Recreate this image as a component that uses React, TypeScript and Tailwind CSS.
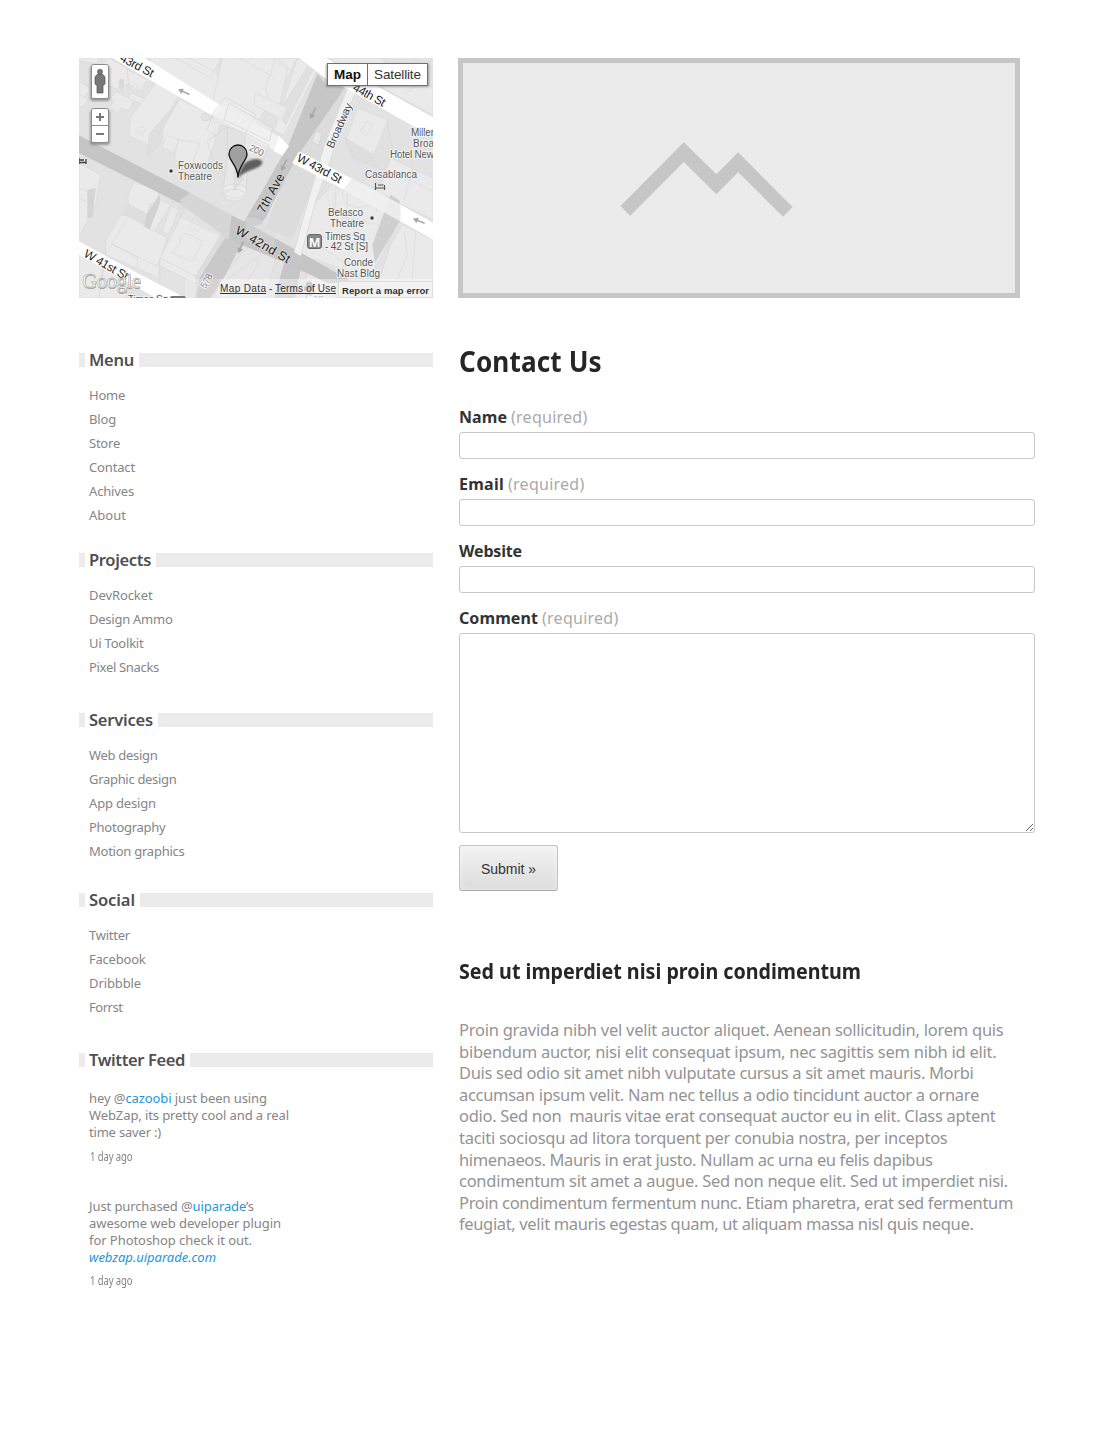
import { useLayoutEffect, useRef, type ReactNode } from 'react';

/* Single line of text whose tracking is adjusted so that it spans `w` pixels. */
function Fit({ w, className = '', children }: { w: number; className?: string; children: ReactNode }) {
  const ref = useRef<HTMLSpanElement>(null);
  useLayoutEffect(() => {
    const el = ref.current;
    if (!el) return;
    el.style.letterSpacing = '0px';
    const natural = el.getBoundingClientRect().width;
    const count = (el.textContent || '').length;
    el.style.letterSpacing = `${(w - natural) / count}px`;
  }, [w]);
  return (
    <span ref={ref} className={`inline-block whitespace-pre ${className}`}>
      {children}
    </span>
  );
}

type Item = [string, number];

const sections: { title: string; w: number; gap: string; items: Item[] }[] = [
  { title: 'Menu', w: 45, gap: 'mb-[26px]', items: [['Home', 36], ['Blog', 27], ['Store', 31], ['Contact', 46], ['Achives', 45], ['About', 37]] },
  { title: 'Projects', w: 62, gap: 'mb-[34px]', items: [['DevRocket', 63.5], ['Design Ammo', 83.5], ['Ui Toolkit', 54.5], ['Pixel Snacks', 70]] },
  { title: 'Services', w: 64, gap: 'mb-[30px]', items: [['Web design', 68.5], ['Graphic design', 87.5], ['App design', 67], ['Photography', 76.5], ['Motion graphics', 95.5]] },
  { title: 'Social', w: 46, gap: 'mb-[34px]', items: [['Twitter', 41], ['Facebook', 56.5], ['Dribbble', 52], ['Forrst', 33.5]] },
];

const body: Item[] = [
  ['Proin gravida nibh vel velit auctor aliquet. Aenean sollicitudin, lorem quis', 544.5],
  ['bibendum auctor, nisi elit consequat ipsum, nec sagittis sem nibh id elit.', 537.5],
  ['Duis sed odio sit amet nibh vulputate cursus a sit amet mauris. Morbi', 514.5],
  ['accumsan ipsum velit. Nam nec tellus a odio tincidunt auctor a ornare', 520],
  ['odio. Sed non  mauris vitae erat consequat auctor eu in elit. Class aptent', 536.5],
  ['taciti sociosqu ad litora torquent per conubia nostra, per inceptos', 488.5],
  ['himenaeos. Mauris in erat justo. Nullam ac urna eu felis dapibus', 473.5],
  ['condimentum sit amet a augue. Sed non neque elit. Sed ut imperdiet nisi.', 549],
  ['Proin condimentum fermentum nunc. Etiam pharetra, erat sed fermentum', 554],
  ['feugiat, velit mauris egestas quam, ut aliquam massa nisl quis neque.', 514.5],
];

function Heading({ title, w }: { title: string; w: number }) {
  return (
    <div className="flex h-[14px] items-center">
      <div className="h-full w-[6px] bg-[#ebebeb]" />
      <h3 className="ml-[4px] mr-[5px] text-[16.5px] leading-[22px] font-semibold text-[#4f4f4f]">
        <Fit w={w}>{title}</Fit>
      </h3>
      <div className="h-full flex-1 bg-[#ebebeb]" />
    </div>
  );
}

function Arrow({ x, y, r }: { x: number; y: number; r: number }) {
  return (
    <g transform={`translate(${x} ${y}) rotate(${r})`} stroke="#a6a6a6" fill="#a6a6a6">
      <path d="M-5 0H6" strokeWidth="1.5" fill="none" />
      <path d="M-6.500 0L-1.500 -3V3Z" stroke="none" />
    </g>
  );
}

function CityMap() {
  return (
    <svg width="354" height="240" viewBox="0 0 354 240" className="block" fontFamily="Liberation Sans, Arial, sans-serif">
      <defs>
        <filter id="soft" x="-50%" y="-50%" width="200%" height="200%">
          <feGaussianBlur stdDeviation="1.3" />
        </filter>
      </defs>
      <rect width="354" height="240" fill="#e2e2e2" />

      {/* ground drawing, on a grid three times finer than the labels */}
      <g transform="scale(.33333)">
        <g fill="#eaeaea" stroke="#dadada" strokeWidth="2">
          <path d="M0 0H60L55 18L0 8Z" />
          <path d="M0 70L32 90L5 150H0Z" />
          <path d="M90 0L145 30L148 75L120 98L85 80V45L60 25Z" />
          <path d="M145 35L205 65L185 98L150 80Z" />
          <path d="M110 100L165 128L150 160L125 150L118 165L90 150L108 130L95 122Z" />
          <path d="M170 75L178 84L165 98L155 92Z" />
          <path d="M155 105L205 125L195 140L148 122Z" />
          <path d="M0 110L28 122L10 148L0 145Z" />
          <path d="M155 178L230 75L300 110L225 250L210 262L150 232Z" />
          <path d="M185 205L200 212L190 230L174 222Z" />
          <path d="M210 230L300 125L308 130L235 265L208 292Z" fill="#dfdfdf" />
          <path d="M252 210L302 122L395 170L410 245L380 330L250 262Z" />
          <path d="M262 232L300 245L285 285L248 268Z" />
          <path d="M300 245L362 255L335 330L285 302Z" />
          <path d="M210 0H425L410 45L445 70L400 140L225 40Z" />
          <path d="M290 0L395 60L425 0M330 0L405 40" fill="none" />
          <path d="M430 0H655L625 60L520 215L400 138Z" />
          <path d="M560 90L590 0L627 25L600 150L570 140Z" />
          <path d="M655 0L712 40L615 232L585 218Z" />
          <path d="M600 160L690 20L705 28L620 200Z" fill="#e0e0e0" />
          <path d="M530 105L625 150L608 185L525 140Z" />
          <path d="M575 0L650 45M480 0L590 60" fill="none" />
          <path d="M748 0H900L1062 90V172L840 50Z" />
          <path d="M915 0L945 75L1062 5M980 105L1062 50M1000 0L1062 35" fill="none" />
          <path d="M800 250L835 150L925 185L940 270L910 315L815 285Z" />
          <path d="M798 240L885 290L895 330L820 300Z" fill="#dedede" />
          <path d="M845 222L862 190L880 200L862 232Z" />
          <path d="M885 290L925 190L940 270L918 335L893 330Z" fill="#e0e0e0" />
          <path d="M935 300L1062 360V485L965 438L900 400Z" />
          <path d="M960 350L1062 400M1000 330L975 430" fill="none" />
          <path d="M0 315L65 350L50 440L0 535Z" />
          <path d="M0 390L45 408L38 440L0 420Z" />
          <path d="M146 415L165 370L240 400L235 425L212 440L205 470L150 440Z" />
          <path d="M150 440L205 470L240 412V455L205 520L125 480Z" fill="#dedede" />
          <path d="M150 475L265 540L240 610V660L80 590V550L125 470Z" />
          <path d="M98 558L150 475L265 540L235 625Z" />
          <path d="M98 558L175 598V630M80 590L98 558" fill="none" />
          <path d="M245 425L275 440L225 520L200 505Z" />
          <path d="M275 445L300 455L268 530L250 520Z" />
          <path d="M243 600L340 415L458 470L452 520L355 680L243 625Z" />
          <path d="M243 600L350 655L445 500L455 465" fill="none" />
          <path d="M300 545L320 525L372 550L340 610L278 585L305 555Z" />
          <path d="M328 510L370 435L392 448L358 522Z" />
          <path d="M243 625L355 680V720H243Z" fill="#e3e3e3" />
          <path d="M350 655L450 490L455 570L360 720H352Z" fill="#dddddd" />
          <path d="M0 590L70 625L62 720H0Z" />
          <path d="M75 630L150 665L140 720H60Z" />
          <path d="M430 655L515 560L590 600L580 640L560 720H405Z" fill="#e6e6e6" />
          <path d="M440 668L545 590L520 650L455 720" fill="none" />
          <path d="M560 480L640 320L740 375L690 470L640 520Z" fill="#e5e5e5" />
          <path d="M575 440L600 390L650 410L640 490L612 500Z" />
          <path d="M620 330L730 375L640 470L650 345" fill="none" />
          <path d="M760 380L960 480L915 580L870 660L665 590L705 440Z" />
          <path d="M740 400L880 360L935 430L900 500L760 470Z" opacity=".7" />
          <path d="M770 355V470L880 500M805 350V480M705 550L790 610L800 650M770 530L870 570" fill="none" />
          <ellipse cx="830" cy="435" rx="68" ry="55" fill="none" />
          <ellipse cx="840" cy="410" rx="50" ry="38" fill="none" />
          <path d="M970 500L1062 545V720L900 670L935 560Z" />
          <path d="M975 520L985 590L945 690M1010 520L1000 660" fill="none" />
          <path d="M690 630L780 670L760 720H665Z" />
        </g>
        <path d="M60 30L85 45V92L60 82ZM120 65L135 62V95L118 92Z" fill="#dadada" />
        <path d="M935 410L962 428V490L888 615L880 560Z" fill="#cfcfcf" />
        <path d="M25 395L50 390L40 480H25Z" fill="#d4d4d4" />
        <path d="M206 463L243 412V435L212 515L195 505Z" fill="#d2d2d2" />

        {/* avenues */}
        <path d="M712 42L800 85L830 90L740 290L640 545L560 510L600 400L690 110Z" fill="#dcdcdc" />
        <path d="M700 85L716 48L745 84L800 86L662 285L628 345L560 478L545 500L500 508L493 495L560 380L628 262Z" fill="#c6c6c6" />
        <path d="M712 220L728 226L720 262L698 250Z" fill="#e8e8e8" stroke="#cfcfcf" strokeWidth="2" />
        <path d="M455 495L492 560L470 590L440 650L395 720H350L362 660L450 520Z" fill="#c9c9c9" />
        <path d="M620 600L668 620L648 720H585Z" fill="#c6c6c6" />

        {/* 42nd street */}
        <path d="M0 232L330 403L455 470L515 500L810 665L800 675H745L620 615L450 545L300 435L0 285Z" fill="#c5c5c5" />
        <path d="M305 425L335 402L458 468L450 545L380 515L290 470Z" fill="#dedede" opacity=".65" />
        <path d="M500 480L530 478L590 515L585 590L500 540Z" fill="#dddddd" opacity=".4" />

        {/* Broadway */}
        <path d="M808 85H840L775 215L760 290L710 430L665 595L645 582L690 420L735 265Z" fill="#f1f1f1" stroke="#d6d6d6" strokeWidth="2" />

        {/* white streets */}
        <path d="M95 -3H192L432 146L405 176L245 85Z" fill="#fff" />
        <path d="M430 143L602 236L586 278L402 172Z" fill="#f2f2f2" />
        <path d="M600 234L630 265L610 293L584 278Z" fill="#fff" />
        <path d="M660 280L820 362L795 395L640 315Z" fill="#fff" />
        <path d="M818 360L967 440V492L792 395Z" fill="#f2f2f2" opacity=".8" />
        <path d="M965 440L1062 494V545L965 490Z" fill="#fff" />
        <path d="M655 -3H736L1062 178V238L800 90L745 65Z" fill="#fff" />
        <path d="M0 550L165 640L320 720H230L0 590Z" fill="#fff" />

        {/* outlines seen through the streets */}
        <g fill="#ededed" fillOpacity=".5" stroke="#d4d4d4" strokeWidth="2">
          <path d="M405 160L440 118L530 170L500 225L425 200L415 235L385 215Z" />
          <path d="M450 135L580 210L572 250L435 185Z" />
          <path d="M500 225L570 262L545 315L495 290Z" />
          <path d="M385 250L445 205L445 360L400 300Z" fill="none" />
          <path d="M432 395L445 290H505L502 400Z" />
          <ellipse cx="467" cy="398" rx="38" ry="20" />
          <ellipse cx="467" cy="412" rx="32" ry="18" />
          <path d="M465 335L495 360L465 398Z" fill="#d8d8d8" />
        </g>
        <path d="M375 165a14 12 0 0 0 12 22l18-10z" fill="#e2e2e2" stroke="#d0d0d0" strokeWidth="2" />
      </g>

      <Arrow x={105} y={34} r={25} />
      <Arrow x={340} y={163} r={22} />
      <Arrow x={234} y={55} r={-65} />
      <Arrow x={205} y={107} r={-65} />
      <Arrow x={162} y={189} r={-65} />

      {/* street names */}
      <g fill="#222" fontSize="12" stroke="#fff" strokeWidth="2" strokeOpacity=".7" paintOrder="stroke" strokeLinejoin="round">
        <text transform="translate(28 -4) rotate(28)" textLength="50" fontSize="12">W 43rd St</text>
        <text transform="translate(217 102.500) rotate(28)" textLength="49">W 43rd St</text>
        <text transform="translate(273 32) rotate(29)" textLength="35">44th St</text>
        <text transform="translate(4 198) rotate(30)" textLength="49">W 41st St</text>
        <text transform="translate(155.500 175) rotate(30)" textLength="61" fontSize="12.500" strokeOpacity=".25">W 42nd St</text>
        <text transform="translate(185 156) rotate(-61)" textLength="43" fontSize="12.500" strokeOpacity=".25">7th Ave</text>
        <text transform="translate(254 91) rotate(-66)" textLength="48" fontSize="11" fill="#444">Broadway</text>
        <text transform="translate(169.500 92) rotate(26)" textLength="15" fontSize="9.500" fill="#777">200</text>
        <text transform="translate(126.500 231) rotate(-60)" textLength="15" fontSize="9.500" fill="#777">578</text>
      </g>

      {/* places */}
      <g fill="#555" fontSize="10" stroke="#f2f2f2" strokeWidth="2" paintOrder="stroke" strokeLinejoin="round">
        <text x="99" y="110.500" textLength="45">Foxwoods</text>
        <text x="99" y="121.500" textLength="34">Theatre</text>
        <text x="332" y="77.500" textLength="23">Miller</text>
        <text x="334" y="88.500" textLength="21">Broa</text>
        <text x="311" y="99.500" textLength="44">Hotel New</text>
        <text x="286" y="119.500" textLength="52">Casablanca</text>
        <text x="249" y="157.500" textLength="35">Belasco</text>
        <text x="251" y="168.500" textLength="34">Theatre</text>
        <text x="246" y="181.500" textLength="40">Times Sq</text>
        <text x="246" y="191.500" textLength="43">- 42 St [S]</text>
        <text x="265" y="207.500" textLength="29">Conde</text>
        <text x="258" y="218.500" textLength="43">Nast Bldg</text>
        <text x="49" y="244.500" textLength="40">Times Sq</text>
        <text x="226" y="243.500" fill="#999">Gap</text>
      </g>
      <rect x="90" y="111" width="4" height="4" fill="#333" stroke="#f5f5f5" />
      <rect x="291" y="158" width="4" height="4" fill="#333" stroke="#f5f5f5" />
      <rect x="91" y="238" width="16" height="6" rx="2" fill="#777" />
      <path d="M296.500 125V132M305.500 127V132M296.500 130H305.500M299 127H304.500" stroke="#555" strokeWidth="1.200" fill="none" />
      <path d="M0 100V106M7 101V106M0 104.500H7M0 102H5" stroke="#444" strokeWidth="1.300" fill="none" />
      <path d="M227 229V227a3 3 0 0 1 6 0V229M225.500 229H234.500V233H225.500Z" fill="#aaa" stroke="#aaa" />
      <rect x="228.500" y="176.500" width="14" height="14" rx="2.500" fill="#888" stroke="#666" />
      <text x="235.500" y="188.500" textAnchor="middle" fontSize="13.500" fontWeight="bold" fill="#fff">M</text>

      {/* marker */}
      <path d="M159 120C161 111 164 104 172 102C180 99 186 103 182 107C178 112 168 111 159 120Z" fill="#333" opacity=".75" filter="url(#soft)" />
      <path d="M159 119.500C158.500 107 150 103 150 96A9 9 0 0 1 168 96C168 103 159.500 107 159 119.500Z" fill="#a0a0a0" stroke="#111" strokeWidth="1.300" />

      {/* attribution */}
      <path d="M140 221H354V240H140Z" fill="#fff" opacity=".4" />
      <path d="M106 221H140V240H106Z" fill="#fff" opacity=".2" />
      <text x="3.500" y="231" textLength="59" fontFamily="Liberation Serif, serif" fontSize="21" fill="#888" opacity=".8">Google</text>
      <text x="3" y="230" textLength="59" fontFamily="Liberation Serif, serif" fontSize="21" fill="#f6f6f6" stroke="#aaa" strokeWidth=".5">Google</text>
      <g fontSize="10" fill="#333">
        <text x="141" y="234" textLength="46">Map Data</text>
        <text x="190" y="234">-</text>
        <text x="196" y="234" textLength="61">Terms of Use</text>
        <path d="M141 235.500H187M196 235.500H257" stroke="#333" />
      </g>
      <rect x="259.500" y="223.500" width="94" height="16" fill="#f2f2f2" stroke="#ddd" />
      <text x="263" y="236" textLength="87" fontSize="9.500" fontWeight="bold" fill="#333">Report a map error</text>

      {/* controls */}
      <g>
        <rect x="11" y="8" width="20" height="35" rx="3" fill="#666" opacity=".6" filter="url(#soft)" />
        <rect x="12.500" y="6.500" width="17" height="34" rx="2" fill="#fff" stroke="#8c8c8c" />
        <circle cx="21" cy="13.800" r="2.600" fill="#777" stroke="#555" strokeWidth=".6" />
        <path d="M18 16.500H24L26 19V26L24 27.500V35H18V27.500L16 26V19Z" fill="#777" stroke="#555" strokeWidth=".7" />
        <rect x="11" y="52" width="20" height="35" rx="3" fill="#666" opacity=".6" filter="url(#soft)" />
        <rect x="12.500" y="50.500" width="17" height="34" rx="2" fill="#fff" stroke="#8c8c8c" />
        <path d="M12.500 67.500H29.500" stroke="#8c8c8c" />
        <path d="M17 59H25M21 55V63M17 76H25" stroke="#777" strokeWidth="2" />
      </g>
      <g>
        <rect x="247" y="6" width="103" height="23" fill="#555" opacity=".5" filter="url(#soft)" />
        <rect x="248.500" y="5.500" width="100" height="22" fill="#fff" stroke="#707070" />
        <path d="M288.500 5.500V27.500" stroke="#707070" />
        <text x="255" y="21" textLength="27" fontSize="13.500" fontWeight="bold" fill="#111">Map</text>
        <text x="295" y="21" textLength="47" fontSize="13.500" fill="#333">Satellite</text>
      </g>
    </svg>
  );
}

function Label({ label, w, required }: { label: string; w: number; required?: boolean }) {
  return (
    <span className="flex h-[24px] items-center gap-[4px] text-[16px] leading-[24px]">
      <Fit w={w} className="font-bold text-[#333]">{label}</Fit>
      {required && <Fit w={76.5} className="text-[#aaa]">(required)</Fit>}
    </span>
  );
}

function Field({ label, w, required }: { label: string; w: number; required?: boolean }) {
  return (
    <label className="mb-[13px] block">
      <Label label={label} w={w} required={required} />
      <input className="mt-[3px] block h-[27px] w-full rounded-[3px] border border-[#c8c8c8] bg-white" />
    </label>
  );
}

function Ago() {
  return (
    <span className="ml-[1px] block w-[42px] text-[12.5px]">
      <span className="inline-block origin-left scale-x-[0.76]">
        <Fit w={42}>1 day ago</Fit>
      </span>
    </span>
  );
}

export default function App() {
  return (
    <main className="h-[1449px] w-[1100px] overflow-hidden bg-white pt-[58px] pl-[79px] font-['Noto_Sans','Open_Sans',sans-serif]">
      <div className="flex gap-[25px]">
        <CityMap />
        <div className="h-[240px] w-[562px] border-5 border-[#c6c6c6] bg-[#ebebeb]">
          <svg width="552" height="230" viewBox="463 63 552 230" className="block">
            <path d="M620.500 206L683.800 142.300L716.400 174.300L738.200 152.300L792.600 207L783 216.700L738.200 172.300L716.400 194.300L683.800 162L630.200 215.700Z" fill="#c6c6c6" />
          </svg>
        </div>
      </div>

      <div className="flex gap-[26px]">
        <aside className="w-[354px] pt-[55px] text-[13px] text-[#858585]">
          {sections.map((s) => (
            <section key={s.title} className={s.gap}>
              <Heading title={s.title} w={s.w} />
              <ul className="mt-[16px] pl-[10px] leading-[24px]">
                {s.items.map(([t, w]) => (
                  <li key={t} className="h-[24px]">
                    <Fit w={w}>{t}</Fit>
                  </li>
                ))}
              </ul>
            </section>
          ))}
          <Heading title="Twitter Feed" w={96} />
          <div className="mt-[23px] flex flex-col items-start pl-[10px] leading-[17px]">
            <Fit w={178}>hey @<span className="text-[#1f97d6]">cazoobi</span> just been using</Fit>
            <Fit w={200}>WebZap, its pretty cool and a real</Fit>
            <Fit w={72}>time saver :)</Fit>
            <div className="mt-[7px] h-[17px]"><Ago /></div>
          </div>
          <div className="mt-[33px] flex flex-col items-start pl-[10px] leading-[17px]">
            <Fit w={165}>Just purchased @<span className="text-[#1f97d6]">uiparade</span>’s</Fit>
            <Fit w={192}>awesome web developer plugin</Fit>
            <Fit w={163}>for Photoshop check it out.</Fit>
            <Fit w={127} className="text-[#1f97d6] italic">webzap.uiparade.com</Fit>
            <div className="mt-[6px] h-[17px]"><Ago /></div>
          </div>
        </aside>

        <section className="w-[576px] pt-[45px]">
          <h1 className="h-[36px] origin-left scale-x-[0.9] text-[29px] leading-[36px] font-bold text-[#262626]">
            <Fit w={143}>Contact Us</Fit>
          </h1>
          <form className="mt-[26px]" onSubmit={(e) => e.preventDefault()}>
            <Field label="Name" w={48} required />
            <Field label="Email" w={45} required />
            <Field label="Website" w={63} />
            <label className="block">
              <Label label="Comment" w={79} required />
              <textarea className="mt-[3px] block h-[200px] w-full rounded-[3px] border border-[#c8c8c8] bg-white" />
            </label>
            <button className="mt-[12px] block h-[46px] w-[99px] rounded-[3px] border border-[#c4c4c4] border-b-[#aaa] bg-linear-to-b from-[#f3f3f3] to-[#dcdcdc] pt-[2px] text-center font-['Liberation_Sans',Arial,sans-serif] text-[14px] text-[#333] shadow-[inset_0_0_6px_rgba(255,255,255,0.5)]">
              <Fit w={55}>Submit »</Fit>
            </button>
          </form>
          <h2 className="mt-[65px] h-[30px] origin-left scale-x-[0.96] text-[20.5px] leading-[30px] font-bold text-[#262626]">
            <Fit w={402}>Sed ut imperdiet nisi proin condimentum</Fit>
          </h2>
          <div className="mt-[33px] text-[16.5px] leading-[21.6px] text-[#949494]">
            {body.map(([t, w]) => (
              <p key={t} className="h-[21.6px]">
                <Fit w={w}>{t}</Fit>
              </p>
            ))}
          </div>
        </section>
      </div>
    </main>
  );
}
